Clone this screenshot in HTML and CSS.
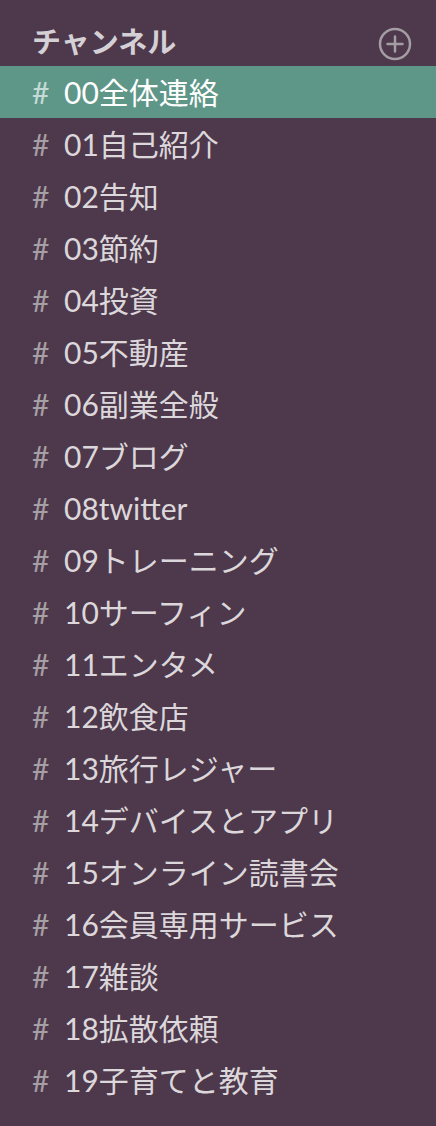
FILE: index.html
```html
<!DOCTYPE html>
<html lang="ja">
<head>
    <meta charset="UTF-8">
    <meta name="viewport" content="width=device-width, initial-scale=1.0">
    <title>チャンネル</title>
    <link rel="stylesheet" href="styles.css">
</head>
<body>
    <div class="sidebar">
        <div class="section-head">
            <span class="section-title">チャンネル</span>
            <svg class="add-icon" width="34" height="34" viewBox="0 0 34 34">
                <circle cx="17" cy="17" r="15" fill="none" stroke="#a59da4" stroke-width="2.5"/>
                <path d="M17 9.5v15M9.5 17h15" stroke="#a59da4" stroke-width="2.5" stroke-linecap="round"/>
            </svg>
        </div>

        <ul class="channels">
            <li class="channel active"><span class="hash">#</span>00全体連絡</li>
            <li class="channel"><span class="hash">#</span>01自己紹介</li>
            <li class="channel"><span class="hash">#</span>02告知</li>
            <li class="channel"><span class="hash">#</span>03節約</li>
            <li class="channel"><span class="hash">#</span>04投資</li>
            <li class="channel"><span class="hash">#</span>05不動産</li>
            <li class="channel"><span class="hash">#</span>06副業全般</li>
            <li class="channel"><span class="hash">#</span>07ブログ</li>
            <li class="channel"><span class="hash">#</span>08twitter</li>
            <li class="channel"><span class="hash">#</span>09トレーニング</li>
            <li class="channel"><span class="hash">#</span>10サーフィン</li>
            <li class="channel"><span class="hash">#</span>11エンタメ</li>
            <li class="channel"><span class="hash">#</span>12飲食店</li>
            <li class="channel"><span class="hash">#</span>13旅行レジャー</li>
            <li class="channel"><span class="hash">#</span>14デバイスとアプリ</li>
            <li class="channel"><span class="hash">#</span>15オンライン読書会</li>
            <li class="channel"><span class="hash">#</span>16会員専用サービス</li>
            <li class="channel"><span class="hash">#</span>17雑談</li>
            <li class="channel"><span class="hash">#</span>18拡散依頼</li>
            <li class="channel"><span class="hash">#</span>19子育てと教育</li>
        </ul>
    </div>
</body>
</html>
```

FILE: styles.css
```css
body {
    margin: 0;
    padding: 0;
    background-color: #4d394b;
    font-family: Lato, "Noto Sans CJK JP", sans-serif;
}

.sidebar {
    width: 436px;
    height: 1126px;
    background-color: #4d394b;
}

.section-head {
    display: flex;
    align-items: center;
    justify-content: space-between;
    height: 48px;
    padding: 18px 24px 0 32px;
}

.section-title {
    color: #d5d0d5;
    font-size: 29px;
    font-weight: bold;
    line-height: 48px;
}

.add-icon {
    margin-top: 4px;
}

.channels {
    list-style: none;
    margin: 0;
    padding: 0;
}

.channel {
    height: 52px;
    line-height: 52px;
    padding-left: 32px;
    color: #dcd7db;
    font-size: 30px;
    white-space: nowrap;
}

.hash {
    display: inline-block;
    width: 32px;
    color: #a69fa5;
}

.channel.active {
    background-color: #5e9688;
    color: #ffffff;
}

.channel.active .hash {
    color: #c3dbd4;
}
```
